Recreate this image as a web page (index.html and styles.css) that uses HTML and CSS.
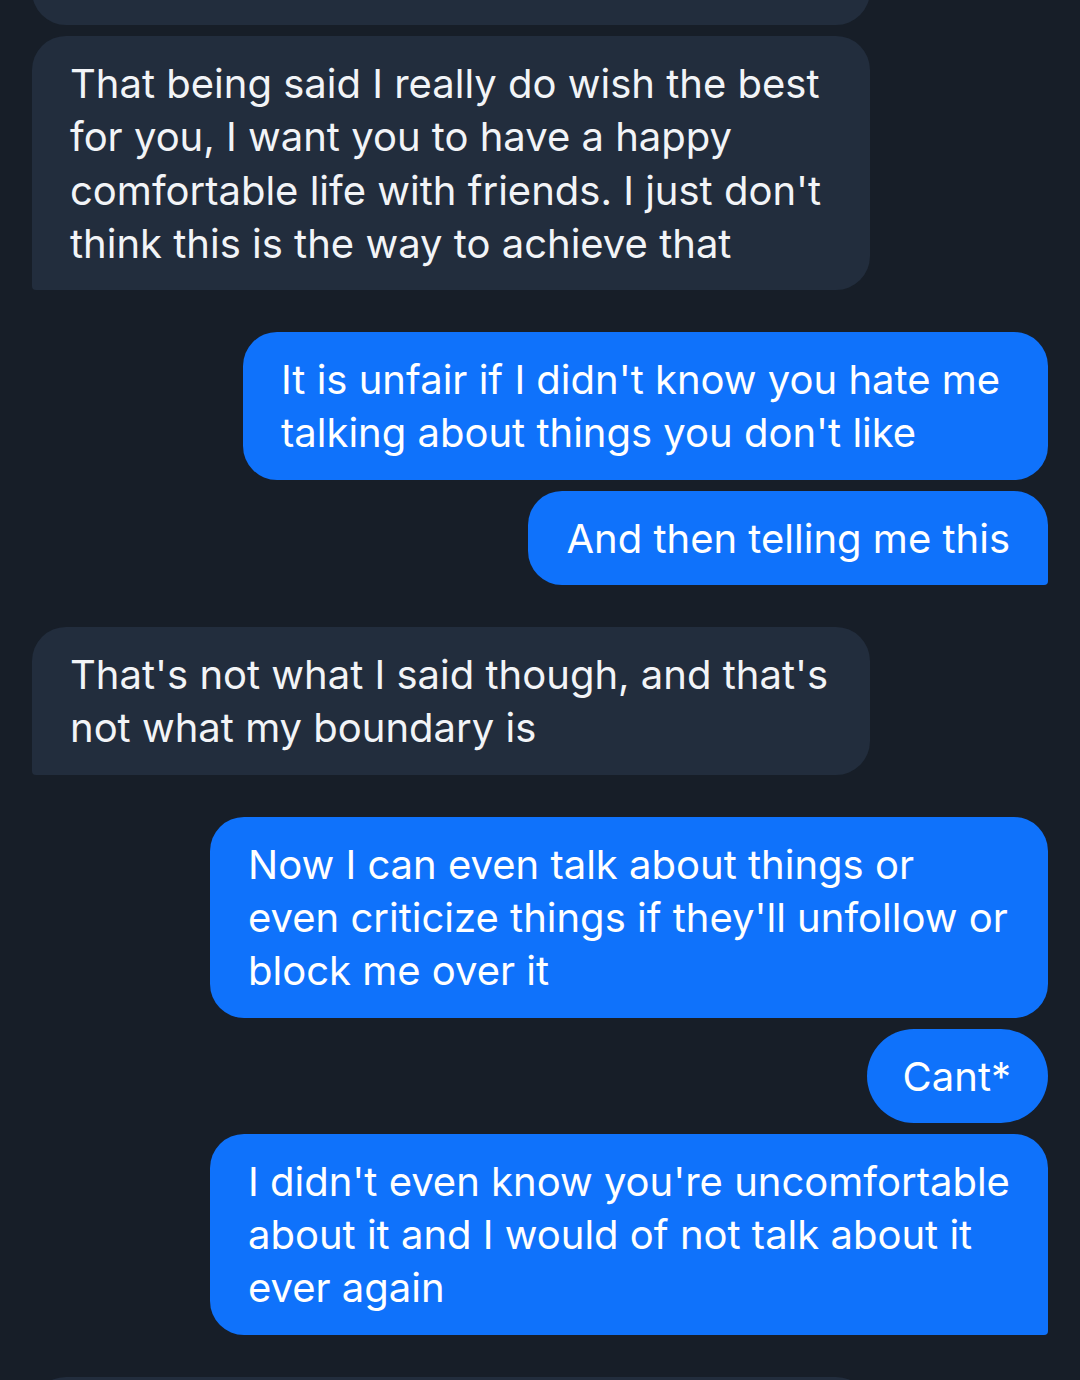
FILE: index.html
```html
<!DOCTYPE html>
<html lang="en">
<head>
<meta charset="utf-8">
<title>Chat</title>
<link rel="stylesheet" href="styles.css">
</head>
<body>
<main class="chat">
  <div class="msg recv cut-top"></div>

  <div class="msg recv tail">That being said I really do wish the best for you, I want you to have a happy comfortable life with friends. I just don't think this is the way to achieve that</div>

  <div class="msg sent narrow group-start">It is unfair if I didn't know you hate me talking about things you don't like</div>
  <div class="msg sent tail">And then telling me this</div>

  <div class="msg recv tail group-start">That's not what I said though, and that's not what my boundary is</div>

  <div class="msg sent group-start">Now I can even talk about things or even criticize things if they'll unfollow or block me over it</div>
  <div class="msg sent pill">Cant*</div>
  <div class="msg sent tail">I didn't even know you're uncomfortable about it and I would of not talk about it ever again</div>

  <div class="msg recv group-start cut-bottom"></div>
</main>
</body>
</html>
```

FILE: styles.css
```css
* { box-sizing: border-box; }

html, body {
  margin: 0;
  padding: 0;
  background: #171e28;
  overflow: hidden;
}

.chat {
  display: flex;
  flex-direction: column;
  gap: 11px;
  padding: 0 32px;
  font-family: "Inter", "Roboto", "Noto Sans", sans-serif;
  font-size: 40px;
  line-height: 53.3px;
  -webkit-font-smoothing: antialiased;
}

.msg {
  width: fit-content;
  max-width: 838px;
  padding: 21px 38px 20px 38px;
  border-radius: 34px;
  white-space: normal;
}

.recv {
  align-self: flex-start;
  background: #222d3d;
  color: #f2f4f7;
}

.sent {
  align-self: flex-end;
  background: #0f72fb;
  color: #ffffff;
}

.recv.tail { border-bottom-left-radius: 4px; }
.sent.tail { border-bottom-right-radius: 4px; }

.group-start { margin-top: 31px; }

.narrow { max-width: 805px; }

.pill {
  border-radius: 47px;
  padding-left: 36px;
  padding-right: 37px;
}

.cut-top {
  width: 838px;
  height: 120px;
  margin-top: -95px;
}

.cut-bottom {
  width: 838px;
  height: 120px;
}
```
